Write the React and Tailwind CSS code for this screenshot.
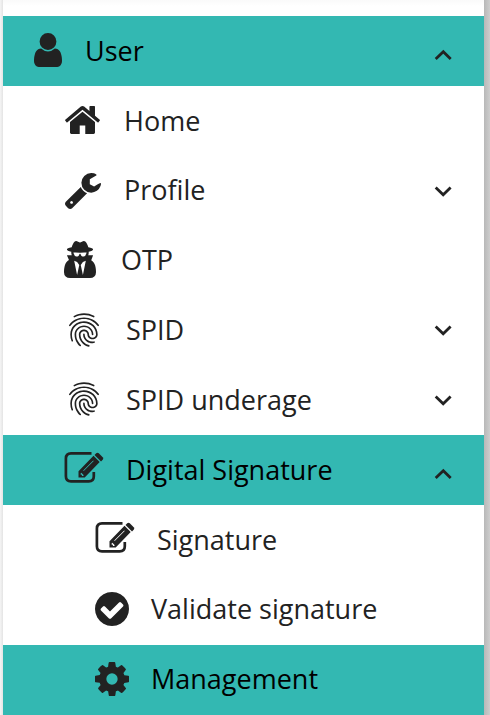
import { useState } from "react";
import { MdFingerprint } from "react-icons/md";

// Solid glyphs, each cropped to its own bounds
const UserIcon = ({ className }) => (
  <svg viewBox="256 128 1280 1536" preserveAspectRatio="none" fill="currentColor" className={className}>
    <path d="M1536 1399q0 109-62.500 187t-150.500 78h-854q-88 0-150.500-78t-62.500-187q0-85 8.500-160.500t31.500-152 58.500-131 94-89 134.500-34.500q131 128 313 128t313-128q76 0 134.500 34.500t94 89 58.500 131 31.500 152 8.500 160.500zm-256-887q0 159-112.500 271.500t-271.500 112.500-271.500-112.500-112.500-271.500 112.500-271.500 271.500-112.500 271.500 112.500 112.500 271.500z" />
  </svg>
);

const HomeIcon = ({ className }) => (
  <svg viewBox="89 253 1614 1283" preserveAspectRatio="none" fill="currentColor" className={className}>
    <path d="M1472 992v480q0 26-19 45t-45 19h-384v-384h-256v384h-384q-26 0-45-19t-19-45v-480q0-1 .5-3t.5-3l575-474 575 474q1 2 1 6zm223-69l-62 74q-8 9-21 11h-3q-13 0-21-7l-692-577-692 577q-12 8-24 7-13-2-21-11l-62-74q-8-10-7-23.500t11-21.500l719-599q32-26 76-26t76 26l244 204v-195q0-14 9-23t23-9h192q14 0 23 9t9 23v408l219 182q10 8 11 21.500t-7 23.500z" />
  </svg>
);

const WrenchIcon = ({ className }) => (
  <svg viewBox="85 128 1641 1643" preserveAspectRatio="none" fill="currentColor" className={className}>
    <path d="M448 1472q0-26-19-45t-45-19-45 19-19 45 19 45 45 19 45-19 19-45zm644-420l-682 682q-37 37-90 37-52 0-91-37l-106-108q-38-36-38-90 0-53 38-91l681-681q39 98 114.500 173.500t173.500 114.500zm634-435q0 39-23 106-47 134-164.500 217.500t-258.500 83.500q-185 0-316.500-131.500t-131.500-316.500 131.500-316.500 316.500-131.500q58 0 121.500 16.500t107.500 46.500q16 11 16 28t-16 28l-293 169v224l193 107q5-3 79-48.500t135.500-81 70.500-35.500q15 0 23.500 10t8.500 25z" />
  </svg>
);

const SecretIcon = ({ className }) => (
  <svg viewBox="128 -116 1408 1664" preserveAspectRatio="none" fill="currentColor" className={className}>
    <path d="M704 1408l96-448-96-128-128-64zm256 0l128-640-128 64-96 128zm160-998q-2-4-4-6-10-8-96-8-70 0-167 19-7 2-21 2t-21-2q-97-19-167-19-86 0-96 8-2 2-4 6 2 18 4 27 2 3 7.500 6.500t7.500 10.500q2 4 7.500 20.500t7 20.500 7.500 17 8.500 17 9 14 12 13.500 14 9.500 17.500 8 20.500 4 24.500 2q36 0 59-12.500t32.500-30 14.500-34.500 11.500-29.500 17.500-12.500h12q11 0 17.500 12.500t11.500 29.500 14.500 34.500 32.500 30 59 12.500q13 0 24.500-2t20.500-4 17.500-8 14-9.500 12-13.500 9-14 8.500-17 7.500-17 7-20.500 7.500-20.500q2-7 7.500-10.500t7.500-6.500q2-9 4-27zm416 879q0 121-73 190t-194 69h-874q-121 0-194-69t-73-190q0-61 4.500-118t19-125.500 37.500-123.500 63.500-103.500 93.500-74.500l-90-220h214q-22-64-22-128 0-12 2-32-194-40-194-96 0-57 210-99 17-62 51.500-134t70.500-114q32-37 76-37 30 0 84 31t84 31 84-31 84-31q44 0 76 37 36 42 70.500 114t51.500 134q210 42 210 99 0 56-194 96 7 81-20 160h214l-82 225q63 33 107.500 96.500t65.500 143.500 29 151.500 8 148.500z" />
  </svg>
);

const EditIcon = ({ className }) => (
  <svg viewBox="0 0 40 32" fill="none" stroke="currentColor" className={className}>
    <path d="M27.500 2.400H7Q1.900 2.400 1.900 7.600V25.200Q1.900 30.300 7 30.300H24.700Q29.800 30.300 29.800 25.200V21" strokeWidth="2.700" />
    <path
      d="M14.500 26.600V20.300L29.500 4.800l6.200 6.200L20.700 26.600zM16.700 22.300v1.400h1.200v1.200h1.200l.7-.7-2.500-2.500zM19.200 19.600l.5.5L29.700 9.900l-.5-.5z"
      fill="currentColor"
      fillRule="evenodd"
      stroke="none"
    />
    <path d="M30.500 4l1.700-1.700q1.300-1.200 2.600 0l3.900 3.900q1.200 1.300 0 2.600L37 10.500z" fill="currentColor" stroke="none" />
  </svg>
);

const CheckIcon = ({ className }) => (
  <svg viewBox="128 128 1536 1536" fill="currentColor" className={className}>
    <path d="M1412 734q0-28-18-46l-91-90q-19-19-45-19t-45 19l-408 407-226-226q-19-19-45-19t-45 19l-91 90q-18 18-18 46 0 27 18 45l362 362q19 19 45 19 27 0 46-19l543-543q18-18 18-45zm252 162q0 209-103 385.500t-279.500 279.500-385.500 103-385.500-103-279.500-279.500-103-385.500 103-385.500 279.500-279.500 385.500-103 385.500 103 279.500 279.500 103 385.500z" />
  </svg>
);

const CogIcon = ({ className }) => (
  <svg viewBox="128 128 1536 1536" fill="currentColor" className={className}>
    <path d="M1152 896q0-106-75-181t-181-75-181 75-75 181 75 181 181 75 181-75 75-181zm512-109v222q0 12-8 23t-20 13l-185 28q-19 54-39 91 35 50 107 138 10 12 10 25t-9 23q-27 37-99 108t-94 71q-12 0-26-9l-138-108q-44 23-91 38-16 136-29 186-7 28-36 28h-222q-14 0-24.500-8.500t-11.500-21.500l-28-184q-49-16-90-37l-141 107q-10 9-25 9-14 0-25-11-126-114-165-168-7-10-7-23 0-12 8-23 15-21 51-66.500t54-70.500q-27-50-41-99l-183-27q-13-2-21-12.500t-8-23.500v-222q0-12 8-23t19-13l186-28q14-46 39-92-40-57-107-138-10-12-10-24 0-10 9-23 26-36 98.500-107.500t94.500-71.500q13 0 26 10l138 107q44-23 91-38 16-136 29-186 7-28 36-28h222q14 0 24.500 8.500t11.500 21.500l28 184q49 16 90 37l142-107q9-9 24-9 13 0 25 10 129 119 165 170 7 8 7 22 0 12-8 23-15 21-51 66.500t-54 70.500q26 50 41 98l183 28q13 2 21 12.500t8 23.500z" />
  </svg>
);

const Chevron = ({ open }) => (
  <svg
    viewBox="0 0 18 12"
    fill="none"
    stroke="currentColor"
    strokeWidth="2.800"
    className={open ? "w-[18px] h-3 mt-2 text-[#222]" : "w-[18px] h-3 text-[#222]"}
  >
    <path d={open ? "M1.700 9.900L9.300 2.700L16.700 9.900" : "M1.700 2.500L9.200 9.700L16.600 2.500"} />
  </svg>
);

const items = [
  { id: "user", label: "User", Icon: UserIcon, row: "h-[70px] pl-[31px]", icon: "w-7 h-[34px] mb-0.5", text: "ml-[23px]", menu: true },
  { id: "home", label: "Home", Icon: HomeIcon, row: "h-[70px] pl-[62px]", icon: "w-[35px] h-7 mb-0.5", text: "ml-6" },
  { id: "profile", label: "Profile", Icon: WrenchIcon, row: "h-[69px] pl-[62px]", icon: "w-9 h-9", text: "ml-[23px] mb-0.5", menu: true },
  { id: "otp", label: "OTP", Icon: SecretIcon, row: "h-[70px] pl-[61px]", icon: "w-8 h-[37px] mb-0.5", text: "ml-[25px]" },
  { id: "spid", label: "SPID", Icon: MdFingerprint, row: "h-[70px] pl-[61px]", icon: "w-10 h-10", text: "ml-[22px]", menu: true },
  { id: "spid-underage", label: "SPID underage", Icon: MdFingerprint, row: "h-[70px] pl-[61px]", icon: "w-10 h-10 mb-0.5", text: "ml-[22px]", menu: true },
  { id: "digital", label: "Digital Signature", Icon: EditIcon, row: "h-[70px] pl-[61px]", icon: "w-10 h-8 mb-1.5", text: "ml-[22px]", menu: true },
  { id: "signature", label: "Signature", Icon: EditIcon, row: "h-[70px] pl-[92px]", icon: "w-10 h-8 mb-1.5", text: "ml-[22px]" },
  { id: "validate", label: "Validate signature", Icon: CheckIcon, row: "h-[70px] pl-[92px]", icon: "w-[34px] h-[34px] mb-0.5", text: "ml-[22px] mb-0.5" },
  { id: "management", label: "Management", Icon: CogIcon, row: "h-[70px] pl-[92px]", icon: "w-[34px] h-[34px] mb-0.5", text: "ml-[22px] mb-0.5", selected: true },
];

const App = () => {
  const [open, setOpen] = useState({ user: true, digital: true });

  return (
    <div className="flex h-[715px] w-[490px] overflow-hidden bg-white font-['Open_Sans',sans-serif]">
      <div className="w-[3px] bg-gradient-to-r from-[#f5f5f5] to-[#e4e4e4]" />
      <nav className="flex w-[481px] flex-col bg-gradient-to-b from-[#fafafa] to-white to-[6px] pt-4">
        {items.map(({ id, label, Icon, row, icon, text, menu, selected }) => {
          const active = selected || open[id];
          return (
            <button
              key={id}
              onClick={() => menu && setOpen((o) => ({ ...o, [id]: !o[id] }))}
              className={`flex shrink-0 items-center pr-8 text-left ${row} ${active ? "bg-[#33b8b2] text-black" : "bg-white text-[#222]"}`}
            >
              <Icon className={`shrink-0 text-[#222] ${icon}`} />
              <span className={`flex-1 whitespace-nowrap text-[27px] leading-9 ${text}`}>{label}</span>
              {menu && <Chevron open={open[id]} />}
            </button>
          );
        })}
      </nav>
      <div className="w-1.5 bg-gradient-to-r from-[#b8b8b8] to-[#cdcdcd]" />
    </div>
  );
};

export default App;
